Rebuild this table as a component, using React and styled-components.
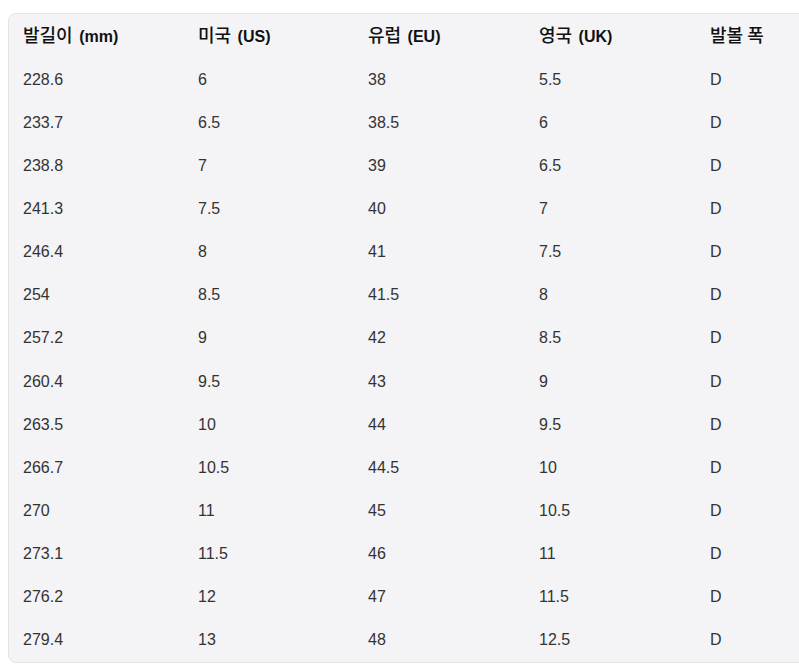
import React from "react";
import styled, { createGlobalStyle } from "styled-components";

const Global = createGlobalStyle`
  html, body { margin: 0; padding: 0; background: #ffffff; overflow: hidden; }
  body { font-family: "Liberation Sans", Arial, "Noto Sans CJK KR", sans-serif; }
`;

const Page = styled.div`
  width: 799px;
  height: 671px;
  padding: 13px 0 0 8px;
  box-sizing: border-box;
  overflow: hidden;
`;

const Frame = styled.div`
  width: 880px;
  background: #f4f3f6;
  border: 1px solid #e3e3e6;
  border-radius: 8px;
  box-sizing: border-box;
  overflow: hidden;
`;

const Table = styled.table`
  border-collapse: collapse;
  table-layout: fixed;
  width: 100%;
`;

const Col = styled.col`
  width: ${(p) => p.$w}px;
`;

const HeadCell = styled.th`
  height: 44px;
  padding: 0 0 4px 14px;
  box-sizing: border-box;
  text-align: left;
  vertical-align: middle;
  font-size: 16px;
  font-weight: 700;
  color: #111111;
  white-space: nowrap;
  font-family: "Liberation Sans", Arial, "Noto Sans CJK KR", sans-serif;
`;

const Ko = styled.span`
  font-family: "Noto Sans CJK KR", sans-serif;
  font-weight: 500;
  font-size: 18px;
  margin-right: 2px;
`;

const Cell = styled.td`
  height: 43.15px;
  padding: 0 0 0 14px;
  vertical-align: middle;
  font-size: 16px;
  color: #333333;
  font-family: "Liberation Sans", Arial, "Noto Sans CJK KR", sans-serif;
`;

const headers = [
  ["발길이", " (mm)"],
  ["미국", " (US)"],
  ["유럽", " (EU)"],
  ["영국", " (UK)"],
  ["발볼 폭", ""],
];

const rows = [
  ["228.6", "6", "38", "5.5", "D"],
  ["233.7", "6.5", "38.5", "6", "D"],
  ["238.8", "7", "39", "6.5", "D"],
  ["241.3", "7.5", "40", "7", "D"],
  ["246.4", "8", "41", "7.5", "D"],
  ["254", "8.5", "41.5", "8", "D"],
  ["257.2", "9", "42", "8.5", "D"],
  ["260.4", "9.5", "43", "9", "D"],
  ["263.5", "10", "44", "9.5", "D"],
  ["266.7", "10.5", "44.5", "10", "D"],
  ["270", "11", "45", "10.5", "D"],
  ["273.1", "11.5", "46", "11", "D"],
  ["276.2", "12", "47", "11.5", "D"],
  ["279.4", "13", "48", "12.5", "D"],
];

const widths = [175, 170, 171, 171, 193];

export default function App() {
  return (
    <>
      <Global />
      <Page>
        <Frame>
          <Table>
            <colgroup>
              {widths.map((w, i) => (
                <Col key={i} $w={w} />
              ))}
            </colgroup>
            <thead>
              <tr>
                {headers.map(([k, e], i) => (
                  <HeadCell key={i}>
                    <Ko>{k}</Ko>
                    {e}
                  </HeadCell>
                ))}
              </tr>
            </thead>
            <tbody>
              {rows.map((r, i) => (
                <tr key={i}>
                  {r.map((c, j) => (
                    <Cell key={j}>{c}</Cell>
                  ))}
                </tr>
              ))}
            </tbody>
          </Table>
        </Frame>
      </Page>
    </>
  );
}
